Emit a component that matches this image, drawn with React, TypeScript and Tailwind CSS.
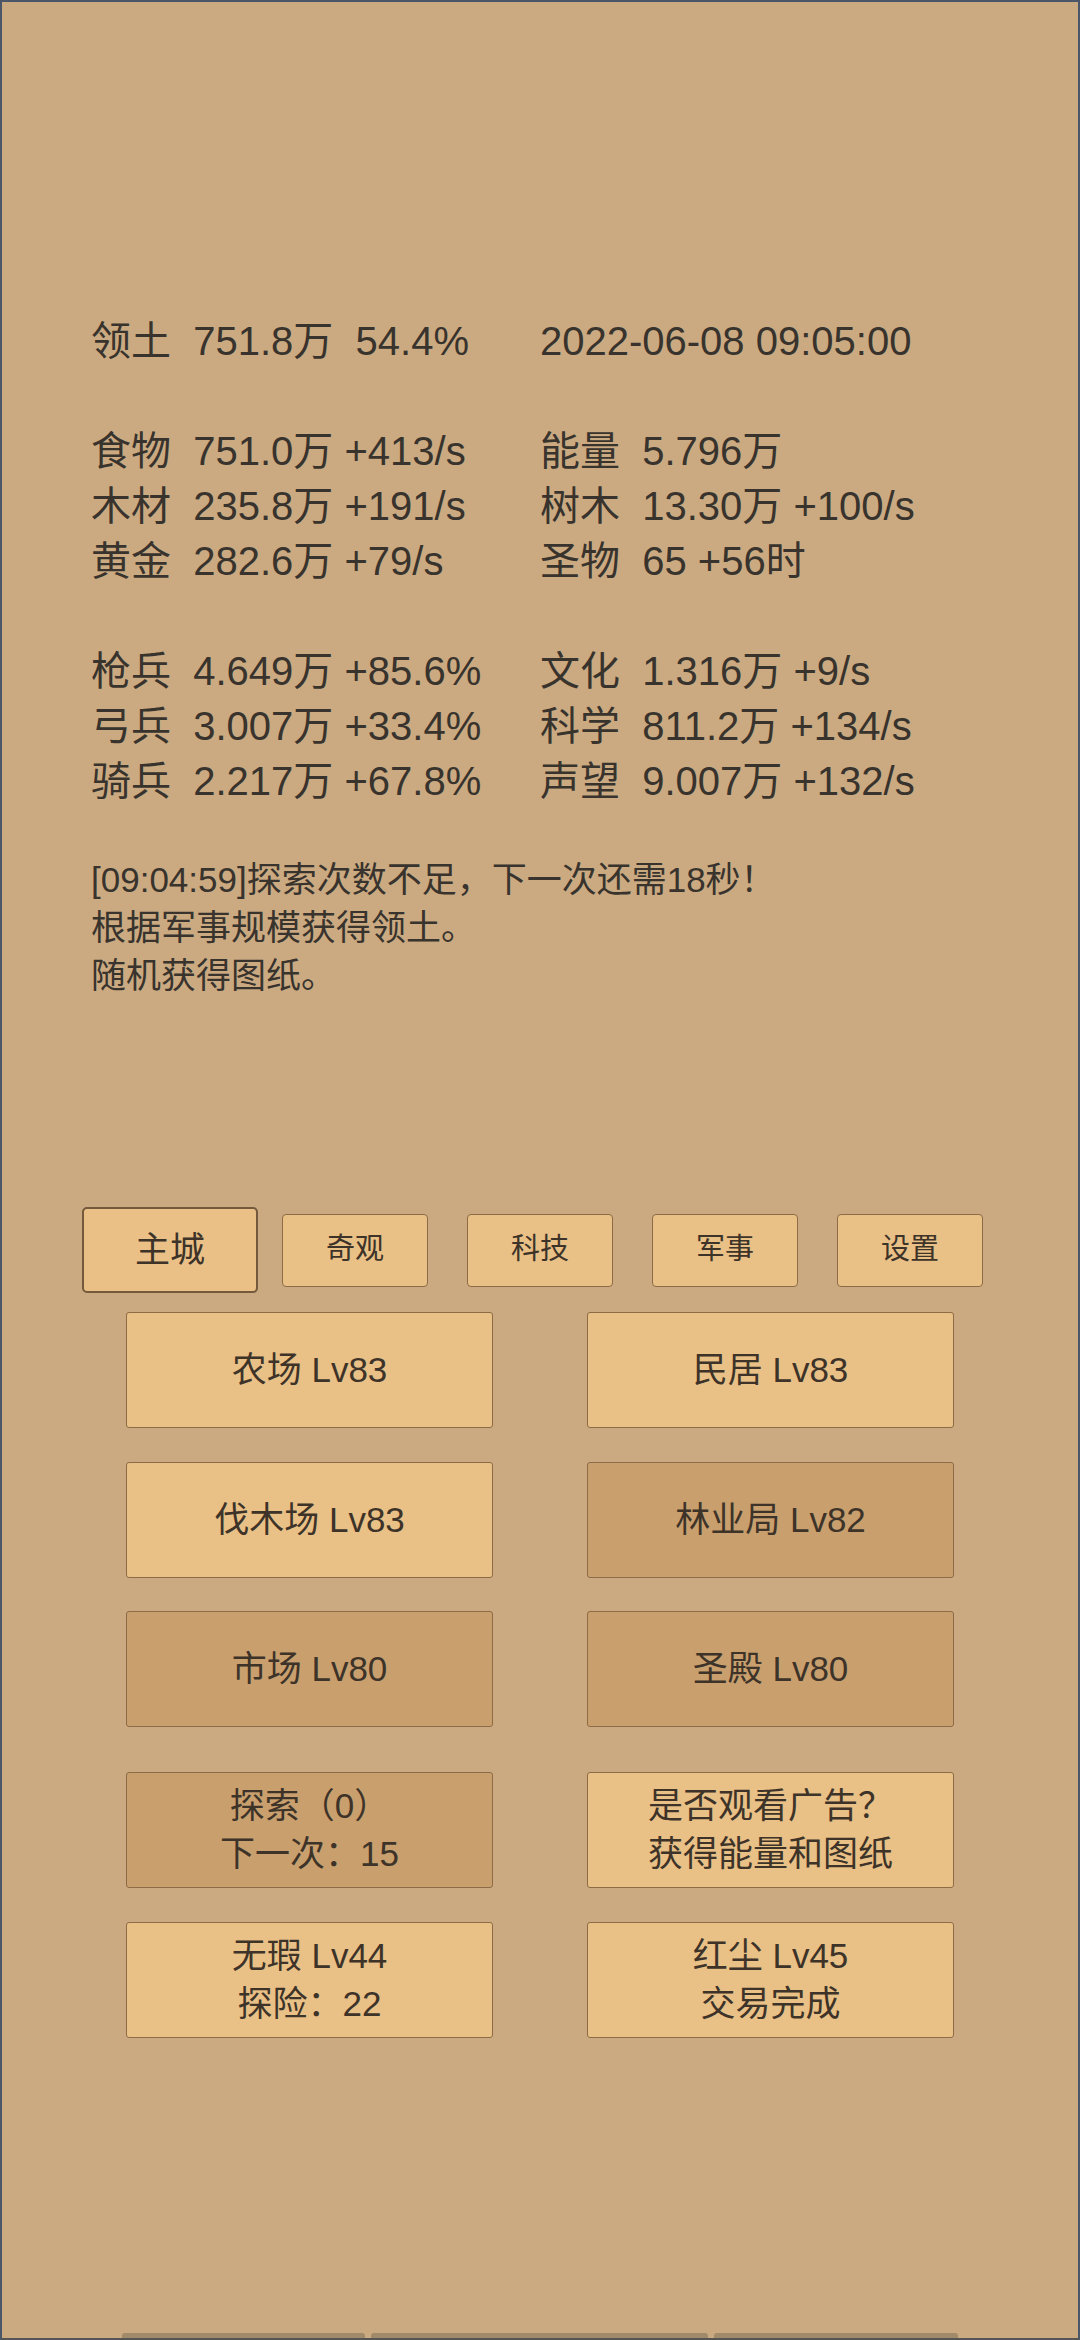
const FONT = "font-['Liberation_Sans','Noto_Sans_CJK_SC',sans-serif]"

const STATS: ([string, string] | null)[] = [
  ['领土  751.8万  54.4%', '2022-06-08 09:05:00'],
  null,
  ['食物  751.0万 +413/s', '能量  5.796万'],
  ['木材  235.8万 +191/s', '树木  13.30万 +100/s'],
  ['黄金  282.6万 +79/s', '圣物  65 +56时'],
  null,
  ['枪兵  4.649万 +85.6%', '文化  1.316万 +9/s'],
  ['弓兵  3.007万 +33.4%', '科学  811.2万 +134/s'],
  ['骑兵  2.217万 +67.8%', '声望  9.007万 +132/s'],
]

const LOG = ['[09:04:59]探索次数不足，下一次还需18秒！', '根据军事规模获得领土。', '随机获得图纸。']

const TABS = ['奇观', '科技', '军事', '设置']

interface Cell {
  lines: string[]
  dark?: boolean
}

const BUILDINGS: { cells: [Cell, Cell]; gap: string }[] = [
  { cells: [{ lines: ['农场 Lv83'] }, { lines: ['民居 Lv83'] }], gap: 'mt-0' },
  { cells: [{ lines: ['伐木场 Lv83'] }, { lines: ['林业局 Lv82'], dark: true }], gap: 'mt-[34px]' },
  { cells: [{ lines: ['市场 Lv80'], dark: true }, { lines: ['圣殿 Lv80'], dark: true }], gap: 'mt-[33px]' },
  { cells: [{ lines: ['探索（0）', '下一次：15'], dark: true }, { lines: ['是否观看广告？', '获得能量和图纸'] }], gap: 'mt-[45px]' },
  { cells: [{ lines: ['无瑕 Lv44', '探险：22'] }, { lines: ['红尘 Lv45', '交易完成'] }], gap: 'mt-[34px]' },
]

function BuildingButton({ cell }: { cell: Cell }) {
  return (
    <div
      className={`w-[367px] h-[116px] rounded-[3px] border border-[#8c6b46] flex flex-col items-center justify-center text-[35px] leading-[48px] text-[#3d3328] ${
        cell.dark ? 'bg-[#c99f6e]' : 'bg-[#e9c086]'
      }`}
    >
      {cell.lines.map((l, i) => (
        <div key={i} className="whitespace-pre">{l}</div>
      ))}
    </div>
  )
}

export default function App() {
  return (
    <div className={`w-[1080px] h-[2340px] border-2 border-[#4b5669] border-b-[#555555] bg-[#cbaa81] flex flex-col ${FONT}`}>
      {/* stats block */}
      <div className="pt-[312px] pl-[89px] text-[40px] leading-[55px] text-[#38332d]">
        {STATS.map((row, i) =>
          row ? (
            <div key={i} className="flex h-[55px]">
              <div className="w-[449px] whitespace-pre">{row[0]}</div>
              <div className="whitespace-pre">{row[1]}</div>
            </div>
          ) : (
            <div key={i} className="h-[55px]" />
          ),
        )}
      </div>

      {/* message log */}
      <div className="mt-[47px] pl-[89px] text-[35px] leading-[48px] text-[#38332d]">
        {LOG.map((l, i) => (
          <div key={i} className="whitespace-pre">{l}</div>
        ))}
      </div>

      {/* tab row */}
      <div className="mt-[207px] pl-[80px] flex items-center h-[86px]">
        <div className="w-[176px] h-[86px] rounded-[5px] border-2 border-[#74593c] bg-[#eac087] flex items-center justify-center text-[35px] text-[#3d3328]">
          主城
        </div>
        <div className="ml-[24px] flex gap-[39px]">
          {TABS.map(t => (
            <div
              key={t}
              className="w-[146px] h-[73px] rounded-[4px] border border-[#8c6b46] bg-[#e9c086] flex items-center justify-center text-[29px] text-[#3d3328]"
            >
              {t}
            </div>
          ))}
        </div>
      </div>

      {/* buildings */}
      <div className="mt-[19px] pl-[124px] flex flex-col">
        {BUILDINGS.map((r, i) => (
          <div key={i} className={`flex gap-[94px] ${r.gap}`}>
            <BuildingButton cell={r.cells[0]} />
            <BuildingButton cell={r.cells[1]} />
          </div>
        ))}
      </div>

      {/* bottom handle bars */}
      <div className="mt-auto pl-[120px] flex gap-[6px]">
        <div className="w-[243px] h-[5px] rounded-t-[3px] bg-[#a08a6a]" />
        <div className="w-[337px] h-[5px] rounded-t-[3px] bg-[#a08a6a]" />
        <div className="w-[244px] h-[5px] rounded-t-[3px] bg-[#a08a6a]" />
      </div>
    </div>
  )
}
